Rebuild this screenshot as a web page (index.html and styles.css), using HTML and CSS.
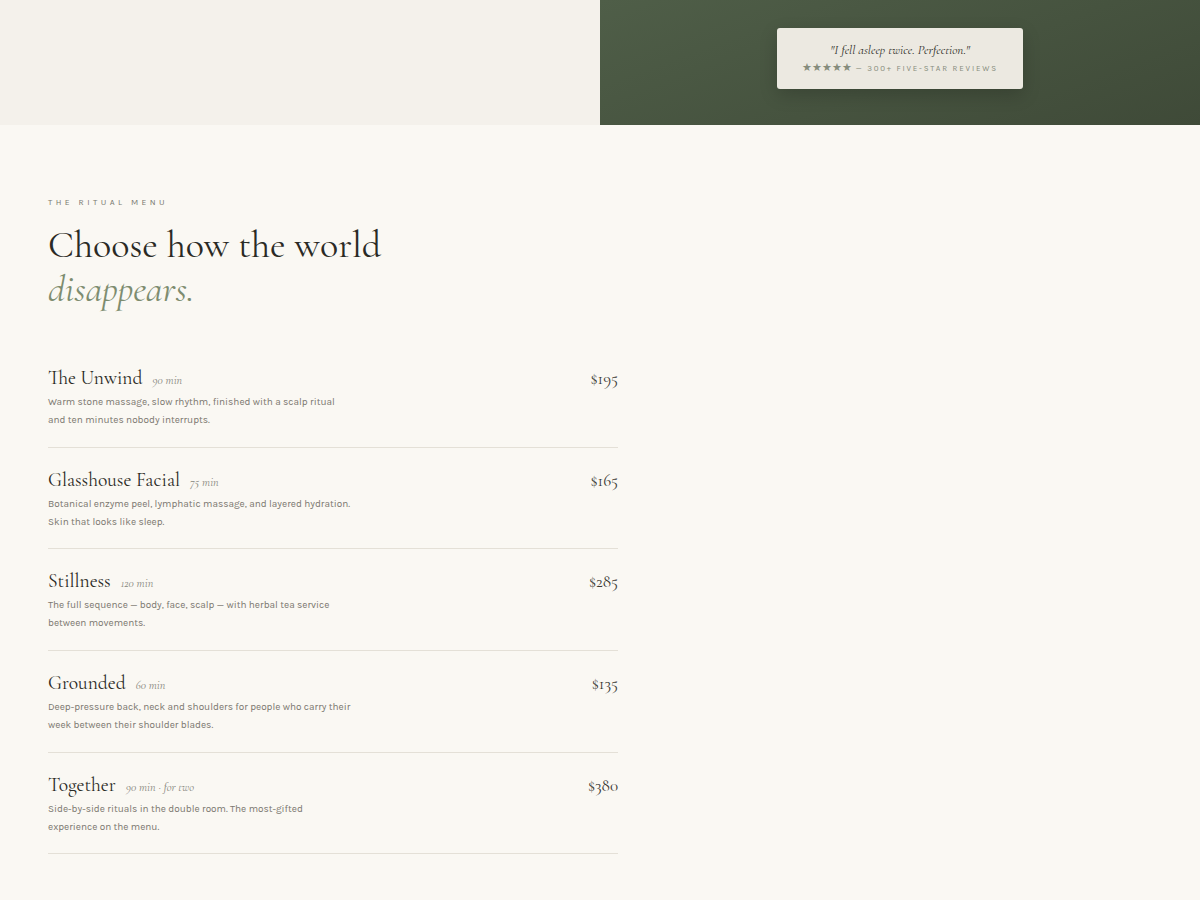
FILE: index.html
```html
<!DOCTYPE html>
<html lang="en">
<head>
    <meta charset="UTF-8">
    <meta name="viewport" content="width=device-width, initial-scale=1.0">
    <title>The Ritual Menu</title>
    <link rel="stylesheet" href="styles.css">
</head>
<body>
    <header class="hero">
        <div class="hero-left"></div>
        <div class="hero-right">
            <div class="review-card">
                <p class="review-quote">"I fell asleep twice. Perfection."</p>
                <p class="review-meta"><span class="stars">★★★★★</span> — 300+ five-star reviews</p>
            </div>
        </div>
    </header>

    <section class="menu-section">
        <p class="eyebrow">The Ritual Menu</p>
        <h1 class="menu-title">Choose how the world<br><em>disappears.</em></h1>

        <ul class="menu-list">
            <li class="menu-item">
                <div class="item-head">
                    <h2 class="item-name">The Unwind</h2>
                    <span class="item-time">90 min</span>
                    <span class="item-price">$195</span>
                </div>
                <p class="item-desc">Warm stone massage, slow rhythm, finished with a scalp ritual and ten minutes nobody interrupts.</p>
            </li>
            <li class="menu-item">
                <div class="item-head">
                    <h2 class="item-name">Glasshouse Facial</h2>
                    <span class="item-time">75 min</span>
                    <span class="item-price">$165</span>
                </div>
                <p class="item-desc">Botanical enzyme peel, lymphatic massage, and layered hydration. Skin that looks like sleep.</p>
            </li>
            <li class="menu-item">
                <div class="item-head">
                    <h2 class="item-name">Stillness</h2>
                    <span class="item-time">120 min</span>
                    <span class="item-price">$285</span>
                </div>
                <p class="item-desc">The full sequence — body, face, scalp — with herbal tea service between movements.</p>
            </li>
            <li class="menu-item">
                <div class="item-head">
                    <h2 class="item-name">Grounded</h2>
                    <span class="item-time">60 min</span>
                    <span class="item-price">$135</span>
                </div>
                <p class="item-desc">Deep-pressure back, neck and shoulders for people who carry their week between their shoulder blades.</p>
            </li>
            <li class="menu-item">
                <div class="item-head">
                    <h2 class="item-name">Together</h2>
                    <span class="item-time">90 min · for two</span>
                    <span class="item-price">$380</span>
                </div>
                <p class="item-desc">Side-by-side rituals in the double room. The most-gifted experience on the menu.</p>
            </li>
        </ul>
    </section>
</body>
</html>
```

FILE: styles.css
```css
body {
    margin: 0;
    background-color: #faf8f3;
    color: #2b2b26;
    font-family: Karla, Lato, "Liberation Sans", sans-serif;
}

.hero {
    display: grid;
    grid-template-columns: 1fr 1fr;
    height: 125px;
}

.hero-left {
    background-color: #f4f1eb;
}

.hero-right {
    background: linear-gradient(160deg, #4f5e48 0%, #46533f 55%, #3f4a38 100%);
    display: flex;
    justify-content: center;
    align-items: flex-start;
    padding-top: 28px;
}

.review-card {
    width: 246px;
    height: 61px;
    box-sizing: border-box;
    background-color: #ece9e1;
    border-radius: 3px;
    box-shadow: 0 6px 18px rgba(0, 0, 0, 0.18);
    text-align: center;
    padding-top: 14px;
}

.review-quote {
    margin: 0;
    font-family: "Cormorant Garamond", "Liberation Serif", serif;
    font-style: italic;
    font-size: 13px;
    line-height: 16px;
    color: #2e2e28;
}

.review-meta {
    margin: 3px 0 0;
    font-size: 8px;
    letter-spacing: 1.8px;
    text-transform: uppercase;
    color: #868c7c;
}

.review-meta .stars {
    font-size: 10.5px;
    letter-spacing: 0;
}

.menu-section {
    padding: 71px 48px 40px;
    width: 570px;
}

.eyebrow {
    margin: 0;
    font-size: 8.5px;
    line-height: 12px;
    letter-spacing: 3.45px;
    text-transform: uppercase;
    color: #77776e;
}

.menu-title {
    margin: 15px 0 35px;
    font-family: "Cormorant Garamond", "Liberation Serif", serif;
    font-weight: normal;
    font-size: 38px;
    line-height: 44px;
    color: #2a2a25;
}

.menu-title em {
    color: #7d8c6f;
}

.menu-list {
    list-style: none;
    margin: 0;
    padding: 0;
}

.menu-item {
    padding: 18px 0 17.7px;
    border-bottom: 1px solid #e4e0d7;
}

.item-head {
    display: flex;
    align-items: baseline;
    height: 28px;
    line-height: 28px;
}

.item-name {
    margin: 0;
    font-family: "Cormorant Garamond", "Liberation Serif", serif;
    font-weight: normal;
    font-size: 19.5px;
    color: #2a2a25;
}

.item-time {
    margin-left: 10px;
    font-family: "Cormorant Garamond", "Liberation Serif", serif;
    font-style: italic;
    font-size: 12px;
    color: #85857b;
}

.item-price {
    margin-left: auto;
    font-family: "Cormorant Garamond", "Liberation Serif", serif;
    font-size: 17px;
    color: #3a3a33;
}

.item-desc {
    margin: 1px 0 0;
    max-width: 304px;
    font-size: 10px;
    line-height: 18px;
    color: #7a776f;
}
```
